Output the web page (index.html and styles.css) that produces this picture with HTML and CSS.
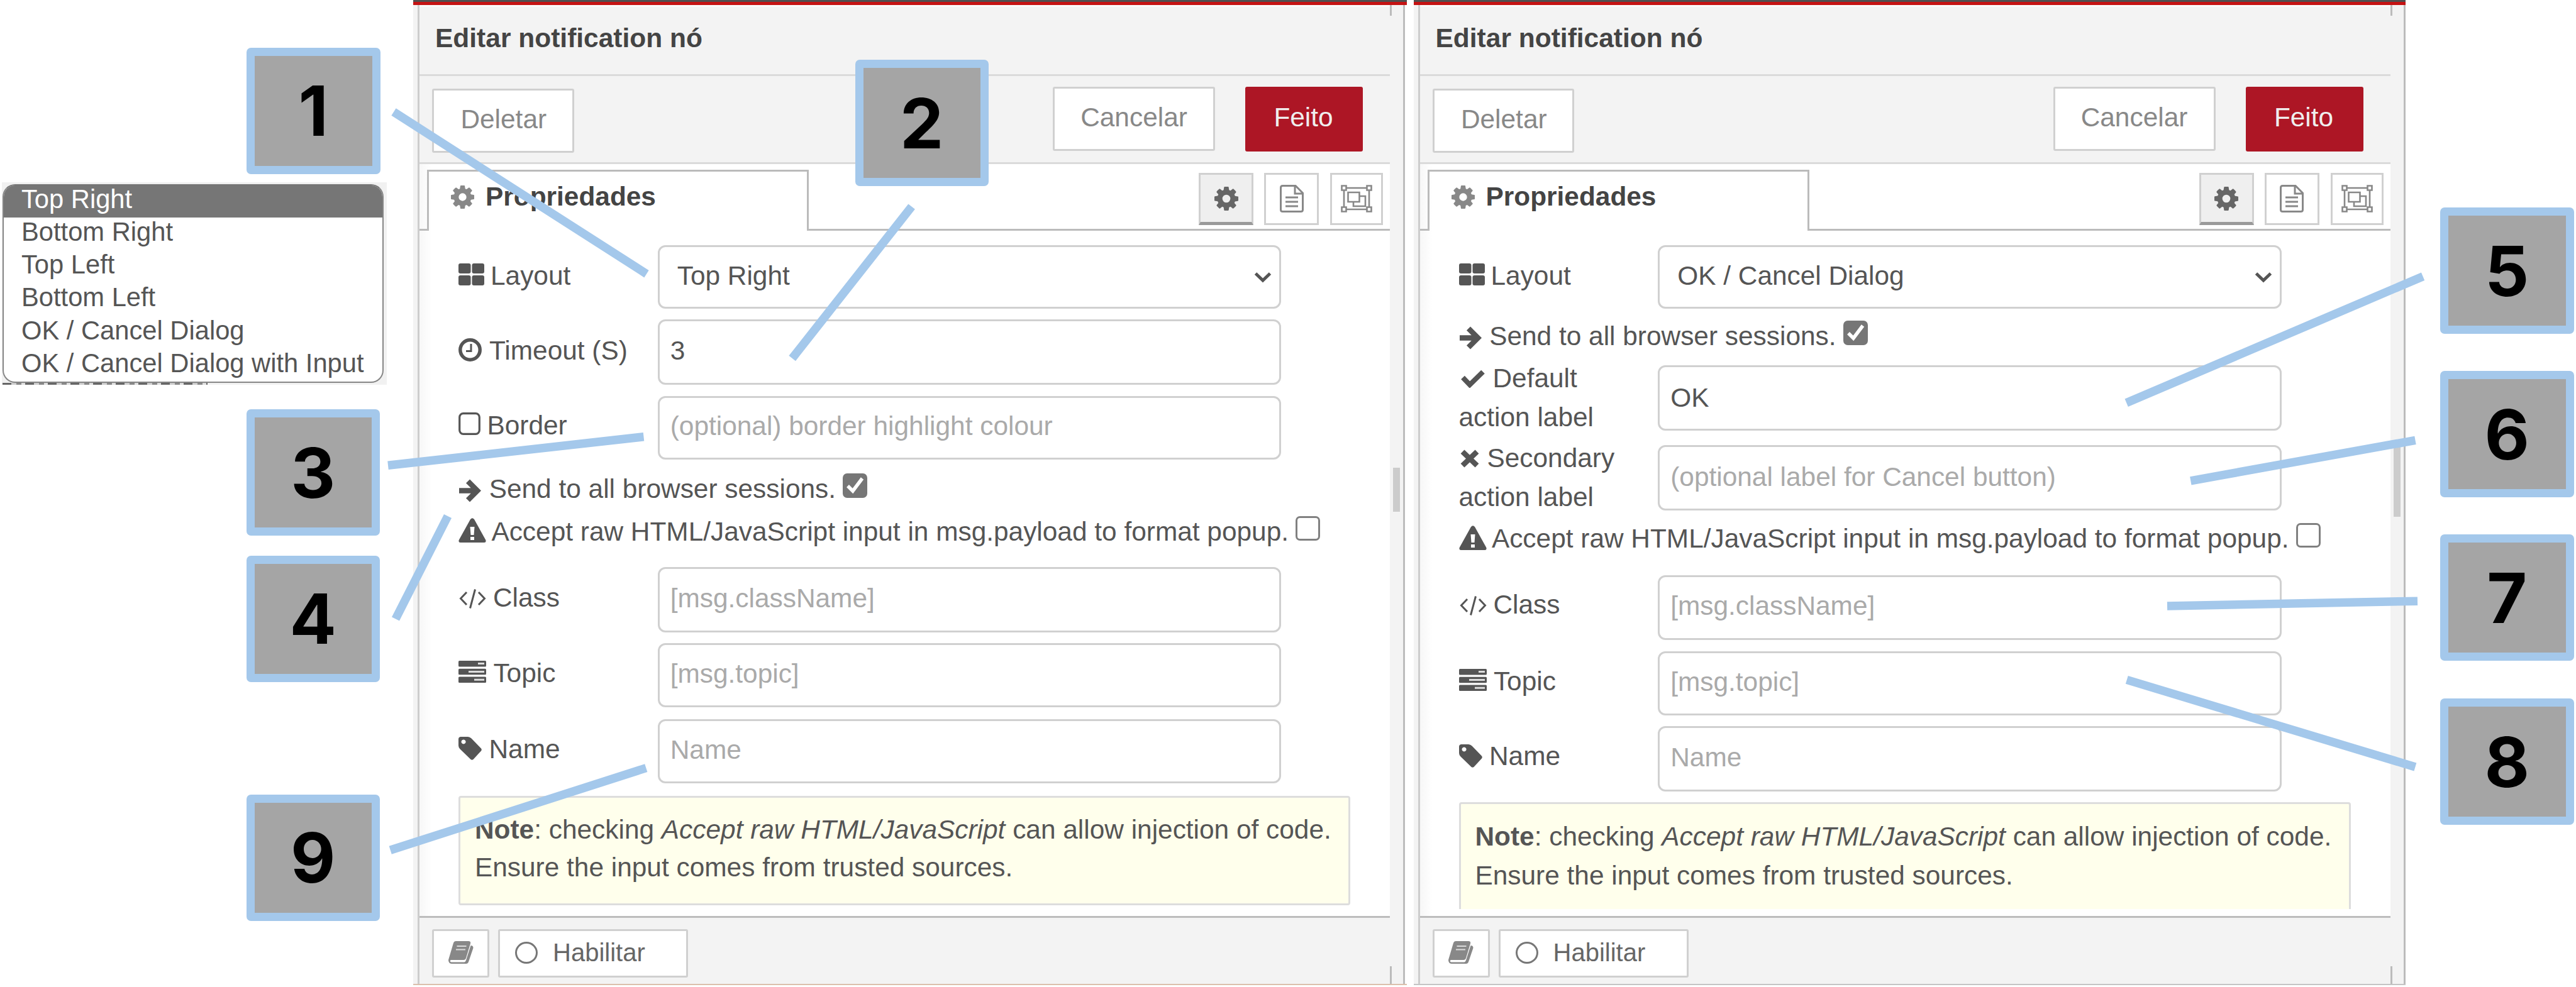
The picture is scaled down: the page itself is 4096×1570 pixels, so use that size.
FILE: index.html
```html
<!DOCTYPE html>
<html lang="pt-BR">
<head>
<meta charset="utf-8">
<title>Editar notification nó</title>
<link rel="stylesheet" href="styles.css">
</head>
<body>
<svg class="defs" aria-hidden="true">
  <symbol id="cog" viewBox="0 128 1536 1536"><path fill="currentColor" d="M1024 896q0-106-75-181t-181-75-181 75-75 181 75 181 181 75 181-75 75-181zm512-109v222q0 12-8 23t-20 13l-185 28q-19 54-39 91 35 50 107 138 10 12 10 25t-9 23q-27 37-99 108t-94 71q-12 0-26-9l-138-108q-44 23-91 38-16 136-29 186-7 28-36 28h-222q-14 0-24.500-8.500t-11.500-21.500l-28-184q-49-16-90-37l-141 107q-10 9-25 9-14 0-25-11-126-114-165-168-7-10-7-23 0-12 8-23 15-21 51-66.500t54-70.500q-27-50-41-99l-183-27q-13-2-21-12.500t-8-23.500v-222q0-12 8-23t19-13l186-28q14-46 39-92-40-57-107-138-10-12-10-24 0-10 9-23 26-36 98.500-107.500t94.500-71.500q13 0 26 10l138 107q44-23 91-38 16-136 29-186 7-28 36-28h222q14 0 24.500 8.500t11.500 21.500l28 184q49 16 90 37l142-107q9-9 24-9 13 0 25 10 129 119 165 170 7 8 7 22 0 12-8 23-15 21-51 66.500t-54 70.500q26 50 41 98l183 28q13 2 21 12.500t8 23.500z"/></symbol>
  <symbol id="grid" viewBox="0 0 41 35"><g fill="currentColor"><rect width="19.500" height="16" rx="3"/><rect x="21.500" width="19.500" height="16" rx="3"/><rect y="19" width="19.500" height="16" rx="3"/><rect x="21.500" y="19" width="19.500" height="16" rx="3"/></g></symbol>
  <symbol id="clock" viewBox="0 0 37 37"><g fill="none" stroke="currentColor"><circle cx="18.500" cy="18.500" r="15.700" stroke-width="5.500"/><path d="M20 9v11.500h-8" stroke-width="3"/></g></symbol>
  <symbol id="square" viewBox="0 0 35 36"><rect x="1.700" y="1.700" width="31.600" height="32.600" rx="6" fill="none" stroke="currentColor" stroke-width="3.200"/></symbol>
  <symbol id="arrow" viewBox="0 0 36 37"><path d="M1 18.500h29M15 3.500l15 15-15 15" fill="none" stroke="currentColor" stroke-width="8.500"/></symbol>
  <symbol id="warn" viewBox="0 0 44 39"><path fill="currentColor" fill-rule="evenodd" d="M19 2q3-3.500 6 0l18.300 33q1.200 4-2.300 4H3q-3.500 0-2.300-4zM18.500 14l1 13h5l1-13zM19 30v5h6v-5z"/></symbol>
  <symbol id="code" viewBox="0 0 43 33"><path d="M12 6L2.500 16 12 26M31 6l9.500 10L31 26M25.500 1.500l-8 30" fill="none" stroke="currentColor" stroke-width="3"/></symbol>
  <symbol id="server" viewBox="0 0 44 35"><g fill="currentColor"><rect width="44" height="9.500" rx="1.500"/><rect y="12.700" width="44" height="9.500" rx="1.500"/><rect y="25.500" width="44" height="9.500" rx="1.500"/></g><path stroke="#ddd" stroke-width="3" d="M31 4.500h10M16 17.500h25M25 30.300h16"/></symbol>
  <symbol id="tag" viewBox="0 0 37 37"><path fill="currentColor" fill-rule="evenodd" d="M3 0h12q3 .3 5.500 2.500L36 18.500q1.500 2 0 4L23.500 36q-2 1.500-4 0L2.500 19.500Q0 17 0 14V3q.3-2.700 3-3zM8 4.500a3.500 3.500 0 1 0 .1 0z"/></symbol>
  <symbol id="check" viewBox="0 0 38 29"><path d="M3 12.500l11 11.500L35 3.500" fill="none" stroke="currentColor" stroke-width="8"/></symbol>
  <symbol id="times" viewBox="0 0 30 29"><path d="M3.500 3.500l23 22M26.500 3.500l-23 22" fill="none" stroke="currentColor" stroke-width="8.500"/></symbol>
  <symbol id="doc" viewBox="0 0 38 44"><g fill="none" stroke="currentColor" stroke-width="3"><path d="M4.500 1.500H25L36.500 13v26.500q0 3-3 3h-29q-3 0-3-3v-35q0-3 3-3zM24 2v12h12"/><path d="M9 20h20M9 27h20M9 34h20"/></g></symbol>
  <symbol id="group" viewBox="0 0 50 44"><g fill="none" stroke="currentColor" stroke-width="2.600"><path d="M8 5h34M8 39h34M5 8v28M45 8v28"/><path d="M1.500 1.500h7v7h-7zM41.500 1.500h7v7h-7zM1.500 35.500h7v7h-7zM41.500 35.500h7v7h-7z"/><path d="M11.500 12h18v15h-18zM30 18h9v16H20v-7"/></g></symbol>
  <symbol id="book" viewBox="0 0 40 36"><path fill="currentColor" d="M12 0h20q4 0 3 4l-7 23q-1 3-4 3H5q-3 0-2 2.500.5 1 2 1h20q2 0 3-3L35.500 7l2.500.500q2 1.500 1.300 4L32 33q-1 3-4 3H5q-5-.5-5-6L8 3q1-3 4-3z"/><path stroke="#fff" stroke-width="2" opacity=".7" d="M13.500 8h15M12 13.500h15"/></symbol>
  <symbol id="chev" viewBox="0 0 28 18"><path d="M2.500 3L14 14 25.500 3" fill="none" stroke="currentColor" stroke-width="5"/></symbol>
  <symbol id="tick" viewBox="0 0 39 39"><path d="M8 20l8 8L31 8" fill="none" stroke="#fff" stroke-width="5.500"/></symbol>
</svg>

<main class="board">
  <aside class="options">
    <ul class="list">
      <li class="selected">Top Right</li>
      <li>Bottom Right</li>
      <li>Top Left</li>
      <li>Bottom Left</li>
      <li>OK / Cancel Dialog</li>
      <li>OK / Cancel Dialog with Input</li>
    </ul>
    <div class="fringe"></div>
  </aside>

  <section class="panel first">
    <div class="topbar"></div>
    <div class="frame">
      <div class="gutter"></div>
      <div class="editor">
        <h1 class="title">Editar notification nó</h1>
        <div class="toolbar"><span class="btn delete">Deletar</span><span class="btn cancel">Cancelar</span><span class="btn done">Feito</span></div>
        <div class="tabs">
          <div class="tab"><svg width="37" height="37"><use href="#cog"/></svg><b>Propriedades</b></div>
          <div class="tools"><span class="tool on"><svg width="38" height="38"><use href="#cog"/></svg></span><span class="tool"><svg width="38" height="44"><use href="#doc"/></svg></span><span class="tool"><svg width="50" height="44"><use href="#group"/></svg></span></div>
        </div>
        <div class="form">
          <div class="row layout"><label><svg width="41" height="35"><use href="#grid"/></svg>Layout</label><div class="field select"><span>Top Right</span><svg width="28" height="18"><use href="#chev"/></svg></div></div>
          <div class="row timeout"><label><svg width="37" height="37"><use href="#clock"/></svg>Timeout (S)</label><div class="field">3</div></div>
          <div class="row border"><label><svg width="35" height="36"><use href="#square"/></svg>Border</label><div class="field hint">(optional) border highlight colour</div></div>
          <div class="line send"><svg width="36" height="37"><use href="#arrow"/></svg><span>Send to all browser sessions.</span><i class="box checked"><svg width="39" height="39"><use href="#tick"/></svg></i></div>
          <div class="line accept"><svg width="44" height="39"><use href="#warn"/></svg><span>Accept raw HTML/JavaScript input in msg.payload to format popup.</span><i class="box"></i></div>
          <div class="row class"><label><svg width="43" height="33"><use href="#code"/></svg>Class</label><div class="field hint">[msg.className]</div></div>
          <div class="row topic"><label><svg width="44" height="35"><use href="#server"/></svg>Topic</label><div class="field hint">[msg.topic]</div></div>
          <div class="row name"><label><svg width="37" height="37"><use href="#tag"/></svg>Name</label><div class="field hint">Name</div></div>
          <p class="note"><b>Note</b>: checking <em>Accept raw HTML/JavaScript</em> can allow injection of code.<br>Ensure the input comes from trusted sources.</p>
        </div>
        <div class="footer"><span class="btn book"><svg width="40" height="36"><use href="#book"/></svg></span><span class="btn enable"><i></i>Habilitar</span></div>
      </div>
      <div class="track"><i class="notch"></i><i class="thumb"></i><i class="notch low"></i></div>
    </div>
  </section>

  <section class="panel second">
    <div class="topbar"></div>
    <div class="frame">
      <div class="gutter"></div>
      <div class="editor">
        <h1 class="title">Editar notification nó</h1>
        <div class="toolbar"><span class="btn delete">Deletar</span><span class="btn cancel">Cancelar</span><span class="btn done">Feito</span></div>
        <div class="tabs">
          <div class="tab"><svg width="37" height="37"><use href="#cog"/></svg><b>Propriedades</b></div>
          <div class="tools"><span class="tool on"><svg width="38" height="38"><use href="#cog"/></svg></span><span class="tool"><svg width="38" height="44"><use href="#doc"/></svg></span><span class="tool"><svg width="50" height="44"><use href="#group"/></svg></span></div>
        </div>
        <div class="form">
          <div class="row layout"><label><svg width="41" height="35"><use href="#grid"/></svg>Layout</label><div class="field select"><span>OK / Cancel Dialog</span><svg width="28" height="18"><use href="#chev"/></svg></div></div>
          <div class="line send"><svg width="36" height="37"><use href="#arrow"/></svg><span>Send to all browser sessions.</span><i class="box checked"><svg width="39" height="39"><use href="#tick"/></svg></i></div>
          <div class="row default"><label class="two"><span><svg width="38" height="29"><use href="#check"/></svg>Default</span><span>action label</span></label><div class="field">OK</div></div>
          <div class="row secondary"><label class="two"><span><svg width="30" height="29"><use href="#times"/></svg>Secondary</span><span>action label</span></label><div class="field hint">(optional label for Cancel button)</div></div>
          <div class="line accept"><svg width="44" height="39"><use href="#warn"/></svg><span>Accept raw HTML/JavaScript input in msg.payload to format popup.</span><i class="box"></i></div>
          <div class="row class"><label><svg width="43" height="33"><use href="#code"/></svg>Class</label><div class="field hint">[msg.className]</div></div>
          <div class="row topic"><label><svg width="44" height="35"><use href="#server"/></svg>Topic</label><div class="field hint">[msg.topic]</div></div>
          <div class="row name"><label><svg width="37" height="37"><use href="#tag"/></svg>Name</label><div class="field hint">Name</div></div>
          <p class="note"><b>Note</b>: checking <em>Accept raw HTML/JavaScript</em> can allow injection of code.<br>Ensure the input comes from trusted sources.</p>
        </div>
        <div class="footer"><span class="btn book"><svg width="40" height="36"><use href="#book"/></svg></span><span class="btn enable"><i></i>Habilitar</span></div>
      </div>
      <div class="track"><i class="notch"></i><i class="thumb"></i><i class="notch low"></i></div>
    </div>
  </section>

  <svg class="leaders" viewBox="0 0 4096 1570"><path d="M626 178L1028 435.700M1449.600 328.600L1259.700 570M617 740.300L1023.500 694.800M629 984.500L712 821M620.700 1352.300L1027.300 1221.600M3852.600 439.700L3381.200 640.800M3840.500 700.300L3483.300 764.800M3844 956.200L3446 963.900M3381.800 1081.400L3840.400 1220"/></svg>
  <span class="badge b1">1</span>
  <span class="badge b2">2</span>
  <span class="badge b3">3</span>
  <span class="badge b4">4</span>
  <span class="badge b5">5</span>
  <span class="badge b6">6</span>
  <span class="badge b7">7</span>
  <span class="badge b8">8</span>
  <span class="badge b9">9</span>
</main>
</body>
</html>
```
FILE: styles.css
```css
* { box-sizing: border-box; }
body {
  margin: 0;
  background: #fff;
  color: #555;
  font: 42.4px/60px "Liberation Sans", Arial, sans-serif;
  white-space: nowrap;
}
svg { display: block; flex: none; }
.defs { position: absolute; width: 0; height: 0; }
.board {
  position: relative;
  display: flex;
  align-items: flex-start;
  width: 4096px;
  height: 1570px;
  overflow: hidden;
}

/* option list */
.options {
  width: 612px;
  height: 322px;
  margin: 290px 42px 0 3px;
  padding: 3px 5px 0 1px;
  background: #f1f1f1;
}
.list {
  list-style: none;
  margin: 0;
  padding: 0;
  height: 316px;
  overflow: hidden;
  background: #fff;
  border: 2px solid #868686;
  border-top-color: #767676;
  border-radius: 20px;
  font-size: 41.700px;
}
.list li { height: 52.200px; line-height: 45px; padding-left: 28px; }
.list .selected { background: #767676; color: #fff; line-height: 43px; height: 51px; }
.fringe {
  width: 326px;
  height: 3px;
  background: repeating-linear-gradient(90deg, #666 0 14px, #ccc 14px 22px, #888 22px 30px, #ddd 30px 36px);
}

/* editor panels */
.panel { width: 1580px; height: 1567px; flex: none; display: flex; flex-direction: column; }
.second { margin-left: 10.500px; width: 1577px; }
.topbar { height: 8px; background: #c41313; border-top: 3px solid #505050; }
.frame { flex: 1; display: flex; border-bottom: 2px solid #c4c4c4; }
.first .frame { border-bottom-color: #dcbfac; }
.first .frame { padding-right: 3px; }
.gutter { width: 10px; background: #f3f3f3; border-right: 3px solid #cdcdcd; }
.editor { width: 1543px; display: flex; flex-direction: column; background: linear-gradient(90deg, rgba(0, 0, 0, .03), rgba(0, 0, 0, 0) 20px); }
.title {
  height: 113px;
  margin: 0;
  padding: 20px 0 0 25px;
  background: #f3f3f3;
  border-bottom: 3px solid #dadada;
  border-top: 3px solid #fafafa;
  color: #444;
  font-size: 42.500px;
  line-height: 60px;
}
.toolbar { height: 140px; display: flex; align-items: flex-start; padding: 16.500px 43px 0 20px; background: #f3f3f3; border-bottom: 3px solid #dadada; }
.btn { display: flex; align-items: center; justify-content: center; background: #fff; border: 3px solid #d0d0d0; border-radius: 3px; color: #888; }
.delete { width: 225.500px; height: 102px; margin-top: 3.500px; padding: 0 0 4px 2px; }
.cancel { width: 258px; height: 102px; margin: 0 48px 0 auto; padding-bottom: 3px; }
.done { width: 187px; height: 103px; background: #ad1625; border-color: #ad1625; color: #f0eeee; padding: 0 2px 4px 0; }
.tabs { height: 106px; display: flex; align-items: stretch; padding-top: 9px; }
.tabs::before { content: ""; width: 12px; border-bottom: 3px solid #bbb; }
.tab { width: 607px; display: flex; align-items: flex-start; border: 3px solid #bbb; border-bottom: 0; padding: 10px 0 0 35px; color: #888; }
.tab svg { margin-top: 12px; }
.tab b { margin-left: 18px; color: #444; line-height: 60px; }
.tools { flex: 1; display: flex; justify-content: flex-end; align-items: flex-start; padding: 5px 11px 0 0; border-bottom: 3px solid #bbb; }
.tool { width: 87px; height: 83px; display: flex; align-items: center; justify-content: center; padding-bottom: 2px; border: 3px solid #d0d0d0; color: #888; margin-left: 17px; }
.tool:last-child { width: 84px; margin-left: 18px; }
.tool.on { background: #efefef; border-bottom: 5px solid #9a9a9a; color: #666; padding-bottom: 0; }

/* form rows */
.form { height: 1090px; padding: 22.500px 63px 0 62px; overflow: hidden; }
.row { display: flex; align-items: stretch; }
.row label { width: 316.700px; display: flex; align-items: center; padding-bottom: 7px; }
label svg { margin-right: 10px; }
.field { width: 991.500px; display: flex; align-items: center; border: 3px solid #d0d0d0; border-radius: 12px; background: #fff; padding: 0 18px 4px 17px; }
.hint { color: #aaa; }
.select { padding: 0 12px 3px 28px; justify-content: space-between; }
.select svg { margin-top: 4px; }
.layout { height: 101px; }
.layout label { padding-bottom: 3px; }
.layout label svg { margin-top: -4px; }
.timeout { height: 104px; margin-top: 17.500px; }
.timeout label, .timeout .field { padding-bottom: 5px; }
.timeout svg { margin: -2px 12px 0 0; }
.border { height: 101px; margin-top: 17.700px; }
.border svg { margin: -5px 10.500px 0 0; }
.line { height: 68px; display: flex; align-items: center; }
.send { margin-top: 13px; }
.send > svg { margin: 6px 12.700px 0 0; }
.accept > svg { margin: -4px 8.400px 0 0; }
.box { width: 39px; height: 39px; flex: none; border: 3px solid #808080; border-radius: 7px; background: #fff; margin: -11px 0 0 11px; }
.checked { border: 0; background: #767676; }
.class { height: 104px; margin-top: 22px; }
.class label { padding-bottom: 5px; }
.class svg { margin: 2px 11px 0 1px; }
.topic { height: 102px; margin-top: 17.700px; }
.topic svg { margin: -4px 11.400px 0 0; }
.name { height: 102px; margin-top: 19px; }
.name svg { margin: -2px 11.500px 0 0; }
.note { width: 1418px; height: 174px; margin: 19.500px 0 0; padding: 21.500px 0 0 23px; background: #ffffec; border: 3px solid #ddd; border-radius: 4px; line-height: 60px; }

.second .send { margin-top: 10px; }
.two { flex-direction: column; justify-content: center; align-items: flex-start !important; padding: 0 !important; line-height: 62px; }
.row .two { margin: -10px 0; }
.two span { display: flex; align-items: center; height: 61.500px; }
.two svg { margin: 0 13px 0 3px; }
.secondary .two svg { margin-left: 2px; }
.default { height: 104px; margin-top: 12.500px; }
.default .field, .secondary .field { padding-bottom: 1px; }
.secondary { height: 104.500px; margin-top: 22.500px; }
.second .accept { margin-top: 11px; }
.second .class { height: 103px; margin-top: 23.500px; }
.second .class label { padding-bottom: 8px; }
.second .topic { margin-top: 18.700px; }
.second .name { height: 104px; margin-top: 16.700px; }
.second .form { height: 1079px; margin-bottom: 11px; }
.second .note { margin-top: 17.500px; padding-top: 20.500px; line-height: 62px; border-bottom-width: 0; }

.footer { flex: 1; display: flex; align-items: flex-start; gap: 14px; padding: 17.500px 0 0 20px; background: #f3f3f3; border-top: 3px solid #bcbcbc; }
.book { width: 91px; height: 77px; }
.book svg { margin-top: -2px; }
.enable { width: 302px; height: 77px; justify-content: flex-start; padding: 0 0 3px 24px; color: #666; font-size: 40px; }
.enable i { width: 36px; height: 35px; margin: 2px 24px 0 0; border: 3px solid #777; border-radius: 50%; }

.track { width: 24px; background: #f3f3f3; border-right: 3px solid #bcbcbc; display: flex; flex-direction: column; align-items: flex-start; }
.notch { width: 3px; height: 17px; background: #bbb; }
.thumb { width: 11px; height: 70px; margin: 719px 0 0 5px; background: #ccc; }
.second .thumb { height: 112px; margin-top: 685px; }
.low { height: 28px; margin-top: auto; }

/* callouts */
.leaders { position: absolute; inset: 0; width: 4096px; height: 1570px; fill: none; stroke: #a4c8eb; stroke-width: 13.500px; }
.badge {
  position: absolute;
  width: 212.500px;
  height: 201px;
  display: flex;
  align-items: center;
  justify-content: center;
  border: 13.500px solid #a4c8eb;
  border-radius: 7px;
  background: #a5a5a5;
  color: #000;
  font: 700 110px/174px Inter, sans-serif;
}
.b1 { left: 392px; top: 75.500px; }
.b2 { left: 1359.500px; top: 95px; }
.b3 { left: 391.500px; top: 651px; }
.b4 { left: 391.500px; top: 883.500px; }
.b9 { left: 391.500px; top: 1263.500px; }
.b5 { left: 3880px; top: 330px; }
.b6 { left: 3880px; top: 590px; }
.b7 { left: 3880px; top: 850px; }
.b8 { left: 3880px; top: 1111px; }
```
